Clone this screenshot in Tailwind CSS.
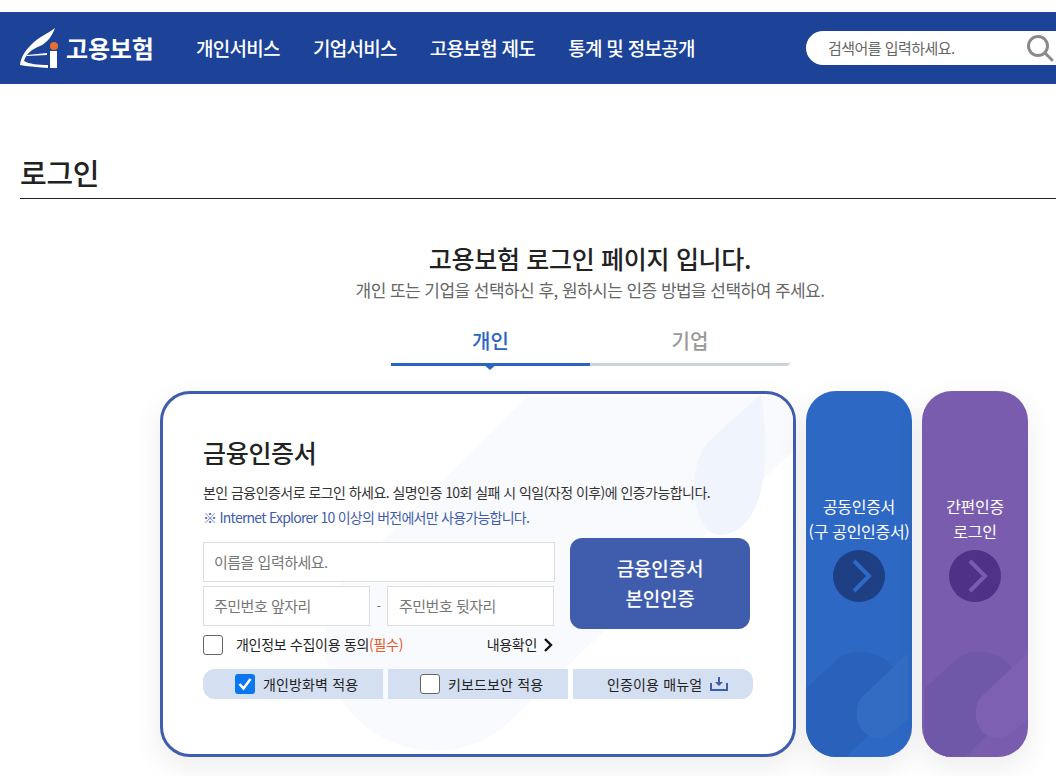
<!DOCTYPE html>
<html lang="ko">
<head>
    <meta charset="UTF-8">
    <meta name="viewport" content="width=device-width, initial-scale=1.0">
    <title>고용보험 로그인</title>
    <script src="https://cdn.jsdelivr.net/npm/@tailwindcss/browser@4"></script>
</head>
<body class="bg-white h-[776px] overflow-hidden font-['Noto_Sans_CJK_KR','Noto_Sans',sans-serif] text-[#222]">
    <!-- Header -->
    <header class="mt-3 h-[72px] bg-[#1c4397] flex items-center pl-5 overflow-hidden text-white">
        <a href="#" class="flex items-center w-[176px] shrink-0">
            <svg width="38" height="42" viewBox="0 0 38 42" class="mt-[1px]">
                <path d="M35 0 C29 5 18 9 11 17 C5 23 1 29 0 37 C12 39 20 39 28 40 L28 37 C18 37 9 36 4 33 C6 26 12 21 20 18 C27 15 32 8 35 0Z" fill="#fff"/>
                <path d="M7 27 L27 25 L27 27 L7 28Z" fill="#fff"/>
                <rect x="30" y="23" width="7" height="17" fill="#fff"/>
                <circle cx="34" cy="18" r="4" fill="#e8702e"/>
            </svg>
            <span class="ml-2 text-[24px] font-bold tracking-[-0.2px] leading-none">고용보험</span>
        </a>
        <nav class="flex gap-[33px] text-[19px] font-medium tracking-[-0.7px] w-[610px] shrink-0">
            <a href="#">개인서비스</a>
            <a href="#">기업서비스</a>
            <a href="#">고용보험 제도</a>
            <a href="#">통계 및 정보공개</a>
        </nav>
        <div class="h-[34px] w-[280px] shrink-0 bg-white rounded-[17px] flex items-center pl-[22px] text-[#666]">
            <span class="text-[15px] tracking-[-0.55px] w-[198px]">검색어를 입력하세요.</span>
            <svg width="28" height="28" viewBox="0 0 28 28" fill="none" stroke="#8a8a8a" stroke-width="3" class="shrink-0">
                <circle cx="12" cy="12" r="9.5"/>
                <path d="M19 19 L26 26" stroke-linecap="round"/>
            </svg>
        </div>
    </header>

    <main>
        <!-- Page title -->
        <div class="ml-5 mt-[67px] h-[48px] border-b border-[#222]">
            <h1 class="text-[29px] font-medium leading-[42px] tracking-[-0.3px]">로그인</h1>
        </div>

        <!-- Intro -->
        <div class="text-center mt-[41px] ml-[190px] w-[800px]">
            <h2 class="text-[25px] font-medium leading-[36px] tracking-[-0.3px]">고용보험 로그인 페이지 입니다.</h2>
            <p class="text-[17px] leading-[24px] text-[#666] tracking-[-0.55px] mt-[2px]">개인 또는 기업을 선택하신 후, 원하시는 인증 방법을 선택하여 주세요.</p>
        </div>

        <!-- Tabs -->
        <div class="ml-[391px] w-[399px] mt-[20px] flex text-[20px] font-medium text-center">
            <div class="relative w-[199px] h-[44px] leading-[38px] text-[#2c65c0] border-b-[3px] border-[#2c65c0]">
                개인
                <span class="absolute left-[91px] top-[41px] w-0 h-0 border-x-[8px] border-x-transparent border-t-[7px] border-t-[#2c65c0]"></span>
            </div>
            <div class="w-[200px] h-[44px] leading-[38px] text-[#999] border-b-[3px] border-[#ced4de] rounded-r-sm">기업</div>
        </div>

        <!-- Login panels -->
        <div class="ml-[160px] mt-[25px] flex gap-[10px] items-start">
            <section class="relative w-[636px] h-[366px] shrink-0 rounded-[30px] border-[3px] border-[#3f5dac] bg-white shadow-[0_10px_30px_rgba(0,0,0,0.08)] overflow-hidden pl-10 pt-[40px]">
                <!-- watermark -->
                <svg class="absolute -left-[3px] -top-[3px]" width="636" height="366" viewBox="0 0 636 366">
                    <path d="M367 6 L223 149 L192 180 C150 225 160 300 205 335 C250 372 315 365 350 330 L633 60 L633 6Z" fill="#f9fafd"/>
                    <path d="M600 0 C608 40 608 85 596 115 C585 140 565 148 552 142 C535 132 530 95 538 70 C542 58 550 48 560 40 L600 4Z" fill="#f0f4fc"/>
                </svg>

                <div class="relative">
                    <h3 class="text-[25px] font-medium leading-[36px] tracking-[-0.3px]">금융인증서</h3>
                    <p class="text-[14px] leading-[20px] tracking-[-0.55px] mt-[12px] text-[#333]">본인 금융인증서로 로그인 하세요. 실명인증 10회 실패 시 익일(자정 이후)에 인증가능합니다.</p>
                    <p class="text-[14px] leading-[20px] tracking-[-0.75px] mt-[5px] text-[#3f5dac]">※ Internet Explorer 10 이상의 버전에서만 사용가능합니다.</p>

                    <div class="flex mt-[15px] gap-[15px]">
                        <div class="w-[352px] flex flex-col gap-[4px] text-[15px] tracking-[-0.5px] text-[#777]">
                            <div class="h-[40px] border border-[#ddd] bg-white flex items-center pl-[10px]">이름을 입력하세요.</div>
                            <div class="flex items-center">
                                <div class="h-[40px] w-[167px] border border-[#ddd] bg-white flex items-center pl-[10px]">주민번호 앞자리</div>
                                <span class="w-[17px] text-center text-[13px]">-</span>
                                <div class="h-[40px] w-[167px] border border-[#ddd] bg-white flex items-center pl-[11px]">주민번호 뒷자리</div>
                            </div>
                        </div>
                        <a href="#" class="w-[180px] h-[91px] -mt-[4px] pb-[2px] rounded-[12px] bg-[#3f5dac] text-white text-[19px] font-medium leading-[30px] tracking-[-0.2px] text-center flex flex-col justify-center">
                            <span>금융인증서</span>
                            <span>본인인증</span>
                        </a>
                    </div>

                    <div class="w-[352px] flex items-center mt-[1px] h-[29px] text-[14px] tracking-[-0.3px]">
                        <span class="w-5 h-5 border border-[#666] rounded-[3px] bg-white shrink-0"></span>
                        <span class="ml-[13px] text-[#222]">개인정보 수집이용 동의<span class="text-[#e8562a]">(필수)</span></span>
                        <span class="ml-auto text-[#222]">내용확인</span>
                        <svg width="10" height="14" viewBox="0 0 10 14" fill="none" stroke="#111" stroke-width="2.4" class="ml-[6px] mr-[2px]"><path d="M2 1 L8 7 L2 13"/></svg>
                    </div>

                    <div class="flex gap-[5px] mt-[10px] text-[14px] tracking-[0.15px] text-[#222]">
                        <div class="w-[180px] h-[30px] bg-[#d4dff1] rounded-l-[12px] flex items-center pl-[32px]">
                            <span class="w-5 h-5 rounded-[3px] bg-[#0a77f0] flex items-center justify-center">
                                <svg width="14" height="14" viewBox="0 0 14 14" fill="none" stroke="#fff" stroke-width="2.6"><path d="M1.5 7 L5.5 11.5 L12.5 2"/></svg>
                            </span>
                            <span class="ml-[8px]">개인방화벽 적용</span>
                        </div>
                        <div class="w-[180px] h-[30px] bg-[#d4dff1] flex items-center pl-[32px]">
                            <span class="w-5 h-5 rounded-[3px] bg-white border border-[#666]"></span>
                            <span class="ml-[8px]">키보드보안 적용</span>
                        </div>
                        <div class="w-[180px] h-[30px] bg-[#d4dff1] rounded-r-[12px] flex items-center pl-[34px]">
                            <span>인증이용 매뉴얼</span>
                            <svg width="18" height="14" viewBox="0 0 18 14" fill="#3f5dac" class="ml-[8px]">
                                <path d="M8 0 H10 V5 H13 L9 9 L5 5 H8Z"/>
                                <path d="M0 6 H2 V12 H16 V6 H18 V14 H0Z"/>
                            </svg>
                        </div>
                    </div>
                </div>
            </section>

            <!-- Certificate option -->
            <a href="#" class="relative w-[106px] h-[366px] shrink-0 rounded-[30px] bg-[#2d68c4] shadow-[0_10px_30px_rgba(0,0,0,0.08)] overflow-hidden text-white text-center text-[16px] leading-[25px] tracking-[-0.3px] pt-[103px] flex flex-col items-center">
                <svg class="absolute left-0 bottom-0" width="106" height="106" viewBox="0 0 106 106">
                    <path d="M0 37 L34 6 C50 -4 80 0 90 22 C93 30 93 40 90 58 L40 106 L0 106Z" fill="#2a62bb"/>
                    <path d="M102 2 L56 46 C46 58 50 86 72 87 C82 88 90 78 102 68Z" fill="#336dc3"/>
                </svg>
                <span class="relative">공동인증서</span>
                <span class="relative whitespace-nowrap">(구 공인인증서)</span>
                <span class="relative mt-[6px] w-[52px] h-[52px] rounded-full bg-[#1f3f85] flex items-center justify-center">
                    <svg width="28" height="36" viewBox="0 0 28 36" fill="none" stroke="#2d68c4" stroke-width="4"><path d="M9 3 L24 18 L9 33"/></svg>
                </span>
            </a>

            <!-- Simple auth option -->
            <a href="#" class="relative w-[106px] h-[366px] shrink-0 rounded-[30px] bg-[#7a5cae] shadow-[0_10px_30px_rgba(0,0,0,0.08)] overflow-hidden text-white text-center text-[16px] leading-[25px] tracking-[-0.3px] pt-[103px] flex flex-col items-center">
                <svg class="absolute left-0 bottom-0" width="106" height="106" viewBox="0 0 106 106">
                    <path d="M3 37 L37 6 C53 -4 83 0 93 22 C96 30 96 40 93 58 L43 106 L3 106Z" fill="#7058a9"/>
                    <path d="M106 2 L59 46 C49 58 53 86 75 87 C85 88 93 78 106 68Z" fill="#7e60b2"/>
                </svg>
                <span class="relative">간편인증</span>
                <span class="relative">로그인</span>
                <span class="relative mt-[6px] w-[52px] h-[52px] rounded-full bg-[#4f3187] flex items-center justify-center">
                    <svg width="28" height="36" viewBox="0 0 28 36" fill="none" stroke="#7a5cae" stroke-width="4"><path d="M9 3 L24 18 L9 33"/></svg>
                </span>
            </a>
        </div>
    </main>
</body>
</html>
